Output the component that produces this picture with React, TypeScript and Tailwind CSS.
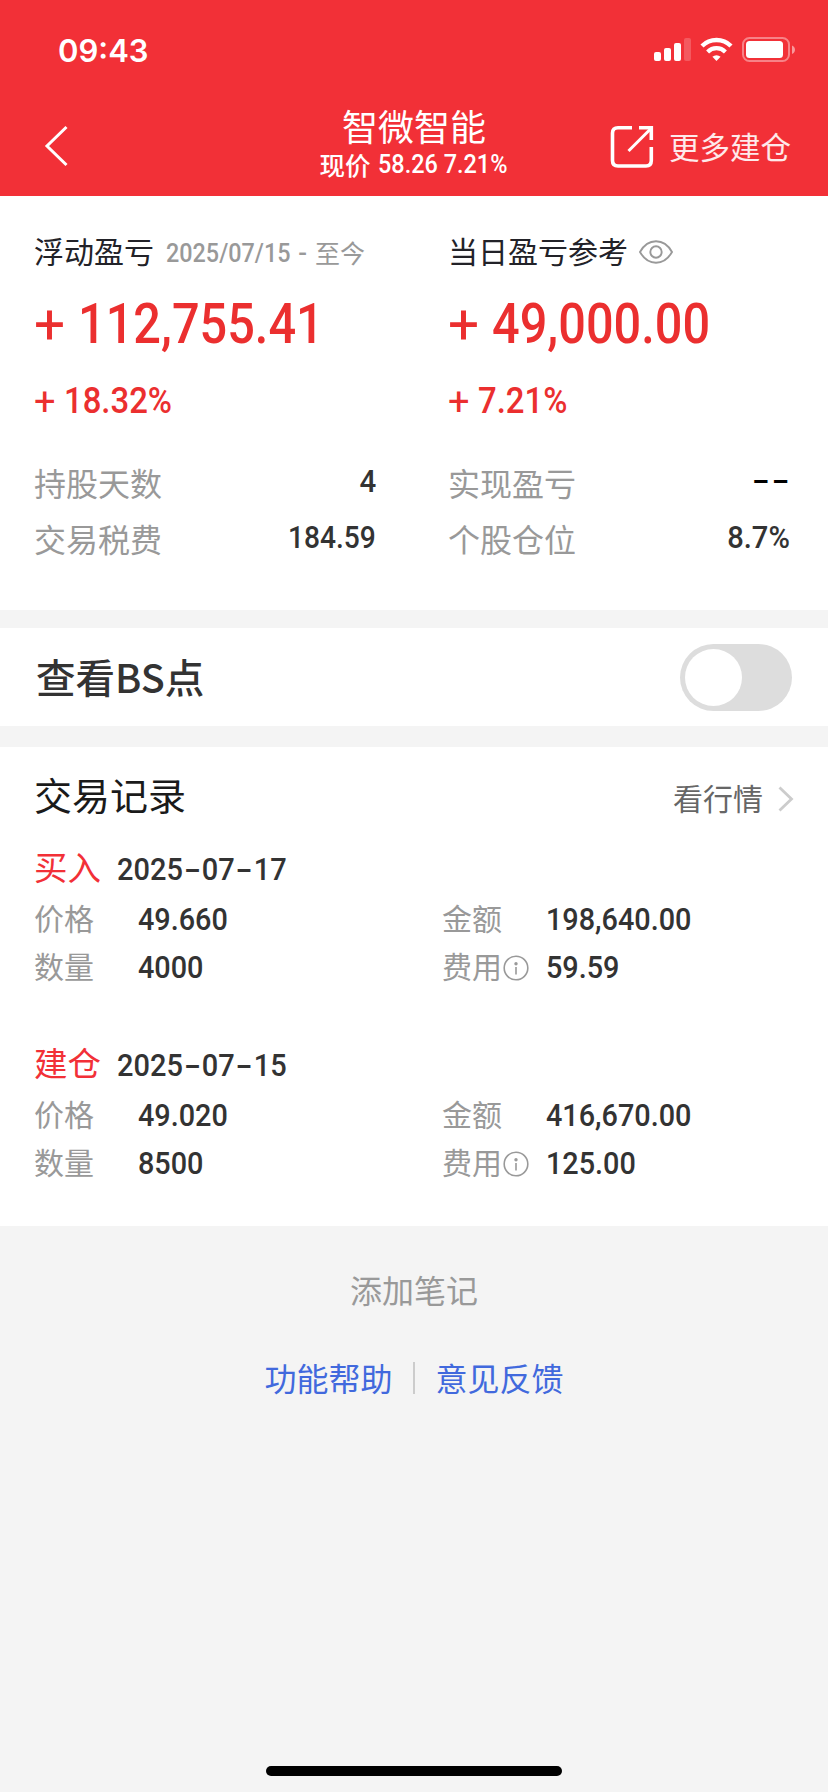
import React from 'react';
import clsx from 'clsx';

const trades = [
  { type: '买入', date: '2025-07-17', price: '49.660', count: '4000', amount: '198,640.00', fee: '59.59' },
  { type: '建仓', date: '2025-07-15', price: '49.020', count: '8500', amount: '416,670.00', fee: '125.00' },
];

// Condensed digits used for every figure on the page
const Num: React.FC<{ children: React.ReactNode; className?: string }> = ({ children, className }) => (
  <span className={clsx("inline-block font-['Roboto',sans-serif] leading-none whitespace-nowrap", className)}>{children}</span>
);

const StatusBar: React.FC = () => (
  <div className="flex items-center justify-between h-[100px] pl-[58px] pr-[33px]">
    <span className="font-['Inter',sans-serif] font-semibold text-[31px] leading-none">09:43</span>
    <svg width="142" height="26" viewBox="0 0 142 26" fill="white">
      <rect x="1" y="15" width="7" height="9" rx="2" />
      <rect x="11" y="11" width="7" height="13" rx="2" />
      <rect x="21" y="6" width="7" height="18" rx="2" />
      <rect x="31" y="1" width="7" height="23" rx="2" opacity="0.2" />
      <path d="M63.5 24 L59.4 19.8 A6 6 0 0 1 67.6 19.8 Z" />
      <path d="M54.6 14.9 A12.6 12.6 0 0 1 72.4 14.9" fill="none" stroke="white" strokeWidth="4.2" />
      <path d="M49 9 A20.5 20.5 0 0 1 78 9" fill="none" stroke="white" strokeWidth="4.4" />
      <rect x="90" y="1" width="46" height="23" rx="6.5" fill="none" stroke="white" strokeWidth="2" opacity="0.4" />
      <rect x="93" y="4" width="37" height="17" rx="3.5" />
      <path d="M139 8.5 C143 10 143 15.5 139 17 Z" opacity="0.5" />
    </svg>
  </div>
);

const Header: React.FC = () => (
  <header className="h-[196px] bg-[#f23037] text-white">
    <StatusBar />
    <div className="grid grid-cols-[240px_1fr_240px] h-[92px] items-center">
      <svg className="ml-[44px]" width="24" height="42" viewBox="0 0 24 42" fill="none" stroke="white" strokeWidth="3">
        <path d="M22.5 2 L3 21 L22.5 40" />
      </svg>
      <div className="flex flex-col items-center mb-[7px]">
        <h1 className="text-[36px] leading-[42px]">智微智能</h1>
        <div className="flex items-center h-[35px] text-[25.5px] leading-none font-medium whitespace-nowrap">
          现价
          <Num className="mt-[3px] ml-[7px] w-[131px] text-[25.5px] font-medium origin-left scale-x-[0.92]">58.26 7.21%</Num>
        </div>
      </div>
      <div className="flex items-center pl-[22px]">
        <svg className="shrink-0 mt-[2px]" width="44" height="44" viewBox="0 0 44 44" fill="none" stroke="white" strokeWidth="3.6">
          <path d="M22 2.8 H8 Q2.5 2.8 2.5 8 V35.5 Q2.5 41 8 41 H36 Q41.3 41 41.3 35.5 V22" />
          <path d="M29 2.8 H41.3 V15" />
          <path d="M18.5 26 L41 3.5" strokeWidth="3" />
        </svg>
        <span className="ml-[15px] text-[30.5px] leading-none whitespace-nowrap text-white/90">更多建仓</span>
      </div>
    </div>
  </header>
);

const EyeIcon: React.FC = () => (
  <svg className="ml-[11px] mt-[3px]" width="34" height="26" viewBox="0 0 34 26" fill="none" stroke="#999999" strokeWidth="1.9">
    <path d="M1 13 C9 -1.3 25 -1.3 33 13 C25 27.3 9 27.3 1 13 Z" />
    <circle cx="17" cy="13" r="5.7" />
  </svg>
);

const InfoIcon: React.FC = () => (
  <svg className="ml-[1px] mt-[5px]" width="26" height="26" viewBox="0 0 26 26" fill="none" stroke="#999999" strokeWidth="1.6">
    <circle cx="13" cy="13" r="11.8" />
    <circle cx="13" cy="8.7" r="1.7" fill="#999999" stroke="none" />
    <path d="M13 12 V19.5" />
  </svg>
);

const Gain: React.FC<{ value: string; percent: string }> = ({ value, percent }) => (
  <div className="text-[#eb2f2f]">
    <div className="flex items-center h-[89px]">
      <Num className="text-[56px] w-[30px] origin-left scale-x-[0.98]">+</Num>
      <Num className="ml-[14px] text-[55px] font-medium origin-left scale-x-[0.885]">{value}</Num>
    </div>
    <div className="flex items-center h-[63px] pt-[2px]">
      <Num className="text-[38px] w-[20px] origin-left">+</Num>
      <Num className="ml-[10px] text-[36.5px] font-medium origin-left scale-x-[0.9]">{percent}</Num>
    </div>
  </div>
);

const Stat: React.FC<{ label: string; children: React.ReactNode }> = ({ label, children }) => (
  <div className="flex items-center justify-between h-[56px]">
    <span className="text-[32px] leading-none text-[#999999]">{label}</span>
    {children}
  </div>
);

const Summary: React.FC = () => (
  <section className="grid grid-cols-[342px_342px] gap-x-[72px] h-[414px] pt-6 pl-[34px] bg-white">
    <div>
      <div className="flex items-center h-[60px]">
        <span className="text-[30px] leading-none text-[#222228]">浮动盈亏</span>
        <span className="flex items-center ml-[12px] mt-[4px] text-[25px] leading-none text-[#999999]">
          <Num className="mt-[2px] w-[149px] text-[25px] font-medium origin-left scale-x-[0.935]">
            2025/07/15<span className="inline-block ml-[9px] scale-x-110">-</span>
          </Num>
          至今
        </span>
      </div>
      <Gain value="112,755.41" percent="18.32%" />
      <div className="mt-[22px]">
        <Stat label="持股天数">
          <Num className="mb-[3px] text-[32px] font-medium text-[#333333] origin-right scale-x-[0.92]">4</Num>
        </Stat>
        <Stat label="交易税费">
          <Num className="mb-[3px] text-[32px] font-medium text-[#333333] origin-right scale-x-[0.88]">184.59</Num>
        </Stat>
      </div>
    </div>
    <div>
      <div className="flex items-center h-[60px]">
        <span className="text-[30px] leading-none text-[#222228]">当日盈亏参考</span>
        <EyeIcon />
      </div>
      <Gain value="49,000.00" percent="7.21%" />
      <div className="mt-[22px]">
        <Stat label="实现盈亏">
          <Num className="-mr-[2px] mb-[5px] text-[32px] font-medium tracking-[1.5px] text-black origin-right scale-x-[1.6]">--</Num>
        </Stat>
        <Stat label="个股仓位">
          <Num className="mb-[3px] text-[32px] font-medium text-[#333333] origin-right scale-x-[0.91]">8.7%</Num>
        </Stat>
      </div>
    </div>
  </section>
);

const TradeDate: React.FC<{ date: string }> = ({ date }) => (
  <Num className="mt-[5px] ml-[16px] text-[32px] font-medium text-[#333333] origin-left scale-x-[0.905]">
    {date.split('-').map((part, i) => (
      <React.Fragment key={i}>
        {i > 0 && <span className="inline-block w-[21px] text-center scale-x-[1.7]">-</span>}
        {part}
      </React.Fragment>
    ))}
  </Num>
);

const Field: React.FC<{ label: string; value: string; info?: boolean }> = ({ label, value, info }) => (
  <div className="flex items-center h-[48px]">
    <span className="flex items-center w-[104px] text-[30px] leading-none text-[#999999]">
      {label}
      {info && <InfoIcon />}
    </span>
    <Num className="mt-[3px] text-[32px] font-medium text-[#333333] origin-left scale-x-[0.9]">{value}</Num>
  </div>
);

const Records: React.FC = () => (
  <section className="h-[479px] mt-[21px] pl-[34px] pr-[34px] bg-white">
    <div className="flex items-center justify-between h-[94px]">
      <h2 className="text-[38px] leading-none text-[#1a1a1a]">交易记录</h2>
      <a className="flex items-center mt-[6px] text-[30px] leading-none text-[#666666]">
        看行情
        <svg className="ml-[15px] mt-[3px]" width="16" height="26" viewBox="0 0 16 26" fill="none" stroke="#cccccc" strokeWidth="2.8">
          <path d="M1.5 1.5 L13.5 13 L1.5 24.5" />
        </svg>
      </a>
    </div>
    <div className="flex flex-col gap-12">
      {trades.map((trade) => (
        <div key={trade.date}>
          <div className="flex items-center h-[50px]">
            <span className="text-[33.5px] leading-none text-[#f23037]">{trade.type}</span>
            <TradeDate date={trade.date} />
          </div>
          <div className="grid grid-cols-[408px_1fr] mt-[2px]">
            <Field label="价格" value={trade.price} />
            <Field label="金额" value={trade.amount} />
            <Field label="数量" value={trade.count} />
            <Field label="费用" value={trade.fee} info />
          </div>
        </div>
      ))}
    </div>
  </section>
);

const App: React.FC = () => {
  return (
    <div className="flex flex-col w-[828px] h-[1792px] overflow-hidden bg-[#f4f4f4] font-['Noto_Sans_CJK_SC',sans-serif]">
      <Header />
      <Summary />

      <section className="flex items-center justify-between h-[98px] mt-[18px] px-[36px] bg-white">
        <span className="mb-[3px] text-[39.5px] leading-none font-medium text-[#333333]">查看BS点</span>
        <button className="flex items-center w-[112px] h-[67px] pl-[4.5px] rounded-full bg-[#dddddd]">
          <span className="w-[57px] h-[57px] rounded-full bg-white" />
        </button>
      </section>

      <Records />

      <footer className="flex flex-col flex-1 items-center pt-[47px] text-[32px] leading-none">
        <span className="text-[#999999]">添加笔记</span>
        <div className="flex items-center mt-[54px] text-[#4169dd]">
          <span>功能帮助</span>
          <span className="w-[2px] h-[32px] mx-[20.5px] mt-[3px] bg-[#cccccc]" />
          <span>意见反馈</span>
        </div>
        <div className="w-[296px] h-[10px] mt-auto mb-4 rounded-full bg-black" />
      </footer>
    </div>
  );
};

export default App;
